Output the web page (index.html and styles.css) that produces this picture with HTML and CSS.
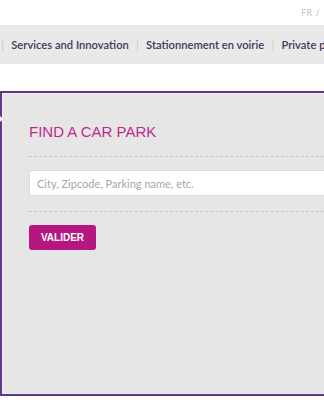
FILE: index.html
```html
<!DOCTYPE html>
<html lang="en">
<head>
    <meta charset="UTF-8">
    <meta name="viewport" content="width=device-width, initial-scale=1.0">
    <title>Find a car park</title>
    <link rel="stylesheet" href="styles.css">
</head>
<body>
    <div class="top-bar">
        <span class="lang">FR /</span>
    </div>

    <nav class="main-nav">
        <span class="sep">|</span>
        <a href="#">Services and Innovation</a>
        <span class="sep">|</span>
        <a href="#">Stationnement en voirie</a>
        <span class="sep">|</span>
        <a href="#">Private parking</a>
    </nav>

    <div class="search-box">
        <span class="notch"></span>
        <h1>FIND A CAR PARK</h1>
        <div class="dashed"></div>
        <input type="text" class="search-input" placeholder="City, Zipcode, Parking name, etc.">
        <div class="dashed"></div>
        <button class="btn">VALIDER</button>
    </div>
</body>
</html>
```

FILE: styles.css
```css
html, body {
    margin: 0;
    padding: 0;
    width: 324px;
    height: 400px;
    overflow: hidden;
    background: #fff;
    font-family: 'Lato', sans-serif;
}

.top-bar {
    height: 25px;
    display: flex;
    justify-content: flex-end;
    align-items: center;
    padding-right: 4px;
}

.lang {
    font-size: 9px;
    color: #c4c4c4;
    letter-spacing: 0.5px;
}

.main-nav {
    height: 39px;
    background: #e9e9e9;
    display: flex;
    align-items: center;
    white-space: nowrap;
    overflow: hidden;
    padding-left: 1px;
}

.main-nav a {
    color: #45385a;
    text-decoration: none;
    font-size: 11.2px;
    font-weight: 600;
}

.main-nav .sep {
    color: #d0d0d0;
    font-size: 13px;
    margin: 0 7px 0 0;
}

.main-nav a + .sep {
    margin-left: 7px;
}

.search-box {
    position: relative;
    margin-top: 27px;
    height: 271px;
    background: #e6e6e6;
    border: 2px solid #5e3786;
    border-right: none;
    box-shadow: inset 1px 1px 0 #f3eef8, inset 0 -1px 0 #f3eef8;
    padding: 30px 0 0 27px;
}

.notch {
    position: absolute;
    left: -2px;
    top: 23px;
    width: 0;
    height: 0;
    border-top: 3px solid transparent;
    border-bottom: 3px solid transparent;
    border-left: 3px solid #fff;
}

h1 {
    margin: 0;
    font-family: 'Liberation Sans', Arial, sans-serif;
    font-weight: normal;
    font-size: 15px;
    color: #c02a8e;
    line-height: 18px;
}

.dashed {
    border-top: 1px dashed #c8c8c8;
    margin: 15px 0 13px;
}

.search-input {
    display: block;
    width: 100%;
    height: 26px;
    box-sizing: border-box;
    border: 1px solid #dcdcdc;
    border-right: none;
    background: #fff;
    padding: 0 7px;
    font-family: 'Lato', sans-serif;
    font-size: 11px;
    outline: none;
}

.search-input::placeholder {
    color: #a6a6a6;
}

.btn {
    display: block;
    background: #b5167f;
    color: #fff;
    border: none;
    border-radius: 3px;
    width: 67px;
    height: 25px;
    font-family: 'Liberation Sans', Arial, sans-serif;
    font-weight: bold;
    font-size: 10px;
    padding: 0;
    cursor: pointer;
}
```
